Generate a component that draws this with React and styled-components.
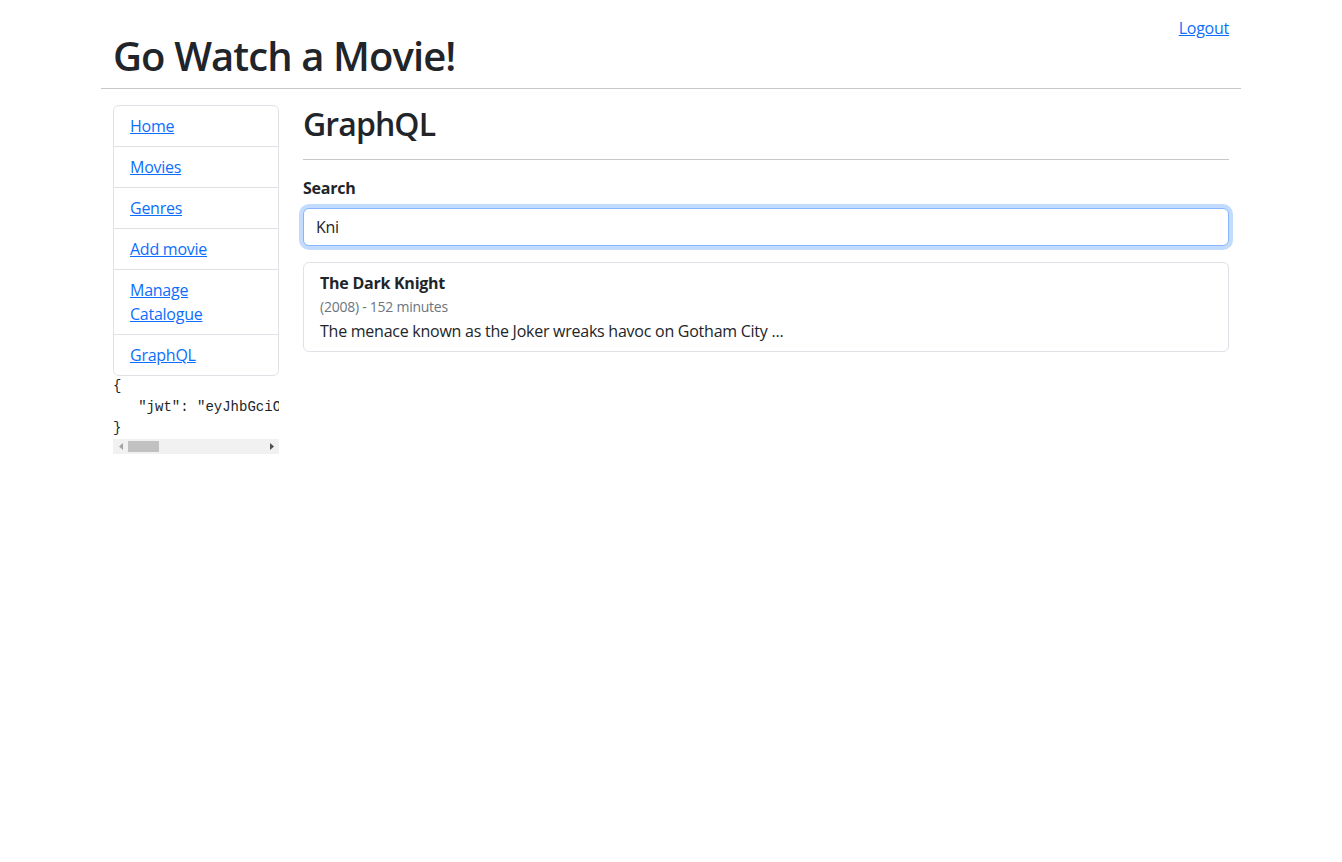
import React, { useState } from "react";
import styled, { createGlobalStyle } from "styled-components";

const GlobalStyle = createGlobalStyle`
  * {
    box-sizing: border-box;
  }
  body {
    margin: 0;
    background: #fff;
    color: #212529;
    font-family: "Open Sans", "Noto Sans", sans-serif;
    font-size: 16px;
    line-height: 1.5;
    letter-spacing: -0.25px;
  }
`;

const jwt = {
  jwt: "eyJhbGciOiJIUzI1NiIsInR5cCI6IkpXVCJ9.eyJuYW1lIjoiQWRtaW4iLCJzdWIiOiIxIn0",
};

const menu = ["Home", "Movies", "Genres", "Add movie", "Manage Catalogue", "GraphQL"];

// little triangle used on the scroll buttons
const Arrow = ({ dir, color }) => (
  <svg width="4" height="7" viewBox="0 0 4 7">
    <path d={dir === "left" ? "M4 0 L0 3.5 L4 7 Z" : "M0 0 L4 3.5 L0 7 Z"} fill={color} />
  </svg>
);

const App = () => {
  const [search, setSearch] = useState("Kni");

  return (
    <>
      <GlobalStyle />
      <Container>
        <HeaderRow>
          <Title>Go Watch a Movie!</Title>
          <Link href="#!" $top>
            Logout
          </Link>
        </HeaderRow>
        <HeaderRule />

        <Row>
          <Sidebar>
            <NavList>
              {menu.map((item) => (
                <NavItem key={item}>
                  <Link href="#!">{item}</Link>
                </NavItem>
              ))}
            </NavList>
            <TokenBox>
              <Pre>{JSON.stringify(jwt, null, 3)}</Pre>
              <ScrollBar>
                <ScrollButton>
                  <Arrow dir="left" color="#a3a3a3" />
                </ScrollButton>
                <Thumb />
                <ScrollButton>
                  <Arrow dir="right" color="#505050" />
                </ScrollButton>
              </ScrollBar>
            </TokenBox>
          </Sidebar>

          <Main>
            <PageTitle>GraphQL</PageTitle>
            <Rule />
            <Label htmlFor="search">Search</Label>
            <Input
              id="search"
              type="text"
              autoFocus
              value={search}
              onChange={(e) => setSearch(e.target.value)}
            />
            <Results>
              <Result>
                <MovieTitle>The Dark Knight</MovieTitle>
                <Meta>(2008) - 152 minutes</Meta>
                <Description>
                  The menace known as the Joker wreaks havoc on Gotham City ...
                </Description>
              </Result>
            </Results>
          </Main>
        </Row>
      </Container>
    </>
  );
};

export default App;

const Container = styled.div`
  max-width: 1140px;
  margin: 0 auto;
  padding: 0 12px;
`;

const HeaderRow = styled.div`
  display: flex;
  justify-content: space-between;
  align-items: flex-start;
`;

const Title = styled.h1`
  margin: 32px 0 8px;
  font-size: 40px;
  font-weight: 600;
  line-height: 1.2;
  letter-spacing: -0.9px;
`;

const Link = styled.a`
  color: #0d6efd;
  text-decoration: underline;
  margin-top: ${(p) => (p.$top ? "16px" : "0")};
`;

const HeaderRule = styled.hr`
  margin: 0 -12px 16px;
  border: 0;
  border-top: 1px solid rgba(33, 37, 41, 0.25);
`;

const Row = styled.div`
  display: grid;
  grid-template-columns: 166px 1fr;
  column-gap: 24px;
  align-items: start;
`;

const Sidebar = styled.div`
  display: flex;
  flex-direction: column;
  min-width: 0;
`;

const NavList = styled.div`
  display: flex;
  flex-direction: column;
  border: 1px solid #dee2e6;
  border-radius: 6px;
`;

const NavItem = styled.div`
  padding: 8px 16px;
  & + & {
    border-top: 1px solid #dee2e6;
  }
`;

const TokenBox = styled.div`
  display: flex;
  flex-direction: column;
  margin-bottom: 16px;
`;

const Pre = styled.pre`
  margin: 0;
  overflow: hidden;
  font-family: "Liberation Mono", monospace;
  font-size: 14px;
  line-height: 1.5;
  letter-spacing: 0;
  color: #212529;
`;

const ScrollBar = styled.div`
  display: flex;
  align-items: center;
  height: 15px;
  background: #f1f1f1;
`;

const ScrollButton = styled.div`
  display: flex;
  align-items: center;
  justify-content: center;
  width: 15px;
  height: 15px;
  &:last-child {
    margin-left: auto;
  }
`;

const Thumb = styled.div`
  width: 31px;
  height: 11px;
  background: #c1c1c1;
`;

const Main = styled.div`
  min-width: 0;
`;

const PageTitle = styled.h2`
  margin: 0;
  font-size: 32px;
  font-weight: 600;
  line-height: 1.2;
  letter-spacing: -0.9px;
`;

const Rule = styled.hr`
  margin: 16px 0;
  border: 0;
  border-top: 1px solid rgba(33, 37, 41, 0.25);
`;

const Label = styled.label`
  display: block;
  margin-bottom: 8px;
  font-weight: 700;
`;

const Input = styled.input`
  display: block;
  width: 100%;
  height: 38px;
  padding: 6px 12px;
  font: inherit;
  letter-spacing: inherit;
  color: #212529;
  caret-color: #212529;
  background: #fff;
  border: 1px solid #86b7fe;
  border-radius: 6px;
  outline: 0;
  box-shadow: 0 0 0 4px rgba(13, 110, 253, 0.25);
`;

const Results = styled.div`
  margin-top: 16px;
  border: 1px solid #dee2e6;
  border-radius: 6px;
`;

const Result = styled.div`
  padding: 8px 16px;
`;

const MovieTitle = styled.div`
  font-weight: 700;
`;

const Meta = styled.div`
  font-size: 14px;
  line-height: 24px;
  color: #6c757d;
`;

const Description = styled.div``;
